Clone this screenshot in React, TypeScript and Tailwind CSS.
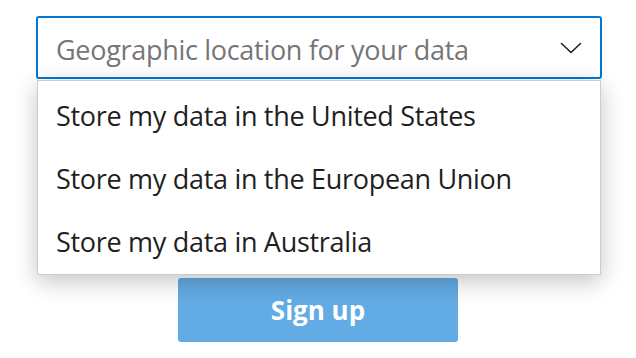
import { useState } from "react";

const options = [
  "Store my data in the United States",
  "Store my data in the European Union",
  "Store my data in Australia",
];

const Chevron = () => (
  <svg width="22" height="12" viewBox="0 0 22 12" fill="none" className="shrink-0">
    <path d="M1.5 1.5 L11 10.5 L20.5 1.5" stroke="#1b1b1b" strokeWidth="1.5" strokeLinecap="round" strokeLinejoin="round" />
  </svg>
);

export default function App() {
  const [open] = useState(true);

  return (
    <div
      className="w-[636px] h-[358px] bg-white overflow-hidden flex flex-col items-center pt-4"
      style={{ fontFamily: '"Open Sans", "Noto Sans", sans-serif' }}
    >
      <div className="relative w-[566px] ml-[2px]">
        {/* select */}
        <div className="h-[63px] rounded-[3px] border-2 border-[#0078d4] bg-white flex items-center justify-between pl-[18px] pr-[18px]">
          <span className="pt-[5px] text-[27px] text-[#767676] tracking-[-0.3px]">Geographic location for your data</span>
          <Chevron />
        </div>

        {/* list */}
        {open && (
          <ul className="absolute left-[1px] right-[1px] top-[64px] z-10 bg-white border border-[#cccccc] shadow-[0_6px_22px_rgba(0,0,0,0.24)] py-[2px]">
            {options.map((o) => (
              <li key={o} className="h-[63px] flex items-center pl-[18px] pt-[4px] text-[27px] text-[#1f1f1f] tracking-[-0.3px]">
                {o}
              </li>
            ))}
          </ul>
        )}
      </div>

      <button className="mt-[199px] w-[280px] h-[64px] rounded-[3px] bg-[#63abe4] text-white text-[26px] font-bold">
        Sign up
      </button>
    </div>
  );
}
